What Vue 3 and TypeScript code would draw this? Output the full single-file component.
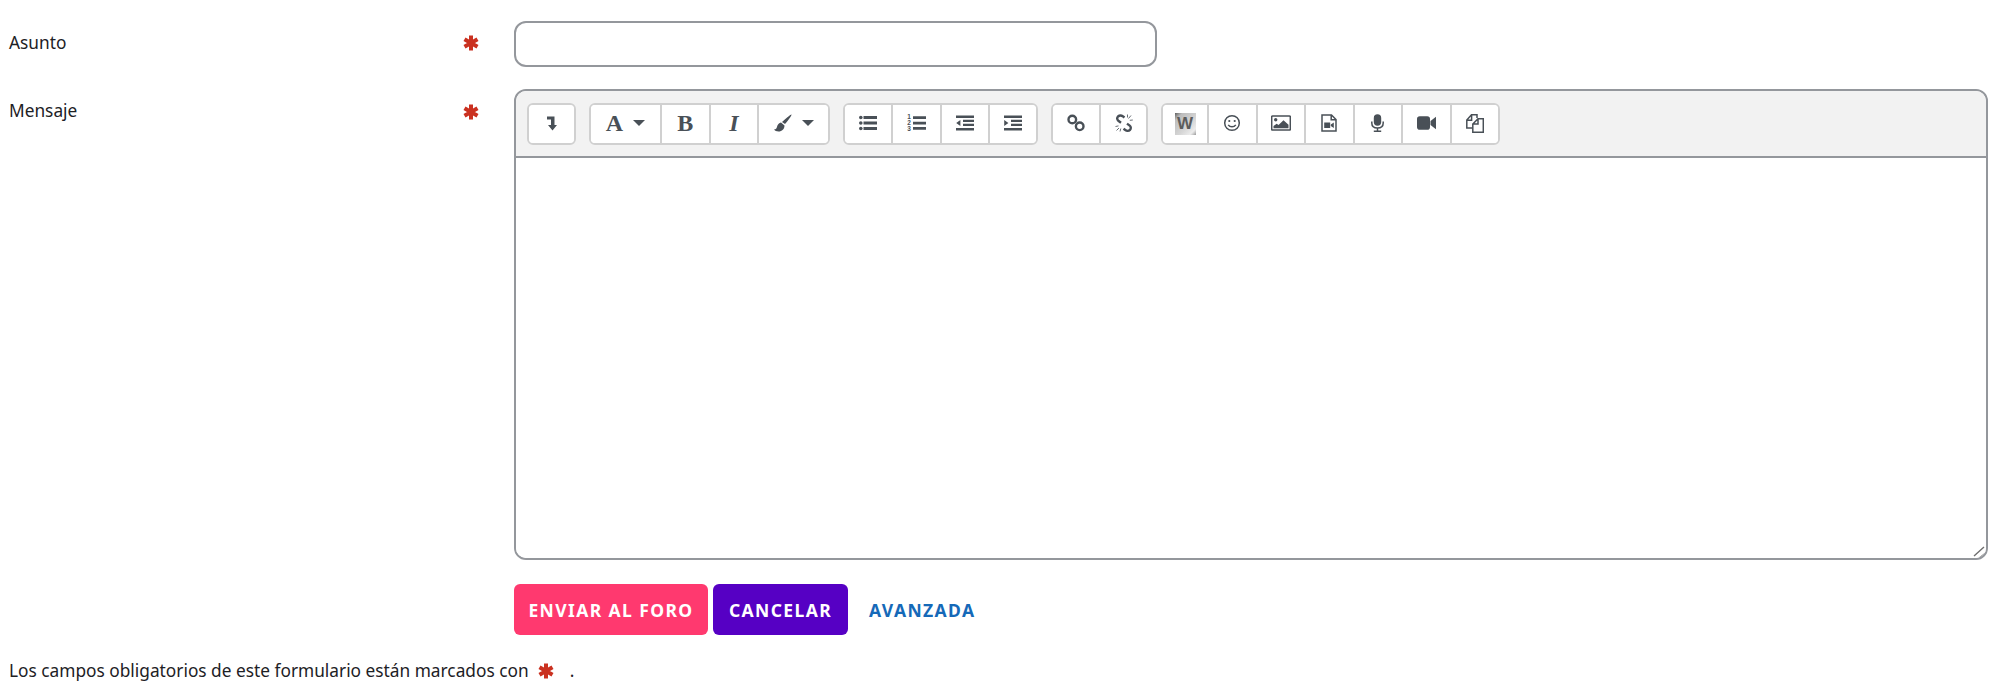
<script setup lang="ts">
const asterisk = 'M8 .5v15M1.500 4.250l13 7.500M14.500 4.250l-13 7.500';
</script>

<template>
  <form class="page" @submit.prevent>
    <div class="row row-subject">
      <label class="label" for="subject">Asunto</label>
      <svg class="req" viewBox="0 0 16 16"><path :d="asterisk" /></svg>
      <input id="subject" class="subject" type="text" />
    </div>

    <div class="row row-message">
      <label class="label" for="message">Mensaje</label>
      <svg class="req" viewBox="0 0 16 16"><path :d="asterisk" /></svg>
      <div class="editor">
        <div class="toolbar">
          <div class="group">
            <button type="button" class="tool">
              <svg viewBox="0 0 10 15" width="10" height="15"><path class="f" d="M0 .5h7.500V9H10L5.500 14.500 1 9h3V3.500H0z" /></svg>
            </button>
          </div>
          <div class="group">
            <button type="button" class="tool wide">
              <span class="serif big">A</span>
              <span class="caret"></span>
            </button>
            <button type="button" class="tool"><span class="serif big">B</span></button>
            <button type="button" class="tool"><span class="serif big ital">I</span></button>
            <button type="button" class="tool wide">
              <svg viewBox="0 0 18 18" width="18" height="18"><path class="f" d="M17.500.5C18 1 14 7 11 10L8 8C11 5 17 0 17.500.5zM7 8.500l3.500 3C10.500 15 8 17.500 4.500 17.500 2.500 17.500.8 16.800 0 15.500c2 0 2.500-1 3-2.700.5-2 2-4 4-4.300z" /></svg>
              <span class="caret"></span>
            </button>
          </div>
          <div class="group">
            <button type="button" class="tool">
              <svg viewBox="0 0 18 18" width="18" height="18"><circle class="f" cx="1.800" cy="3.500" r="1.800" /><circle class="f" cx="1.800" cy="9" r="1.800" /><circle class="f" cx="1.800" cy="14.500" r="1.800" /><path class="f" d="M4.500 2h13.500v3H4.500zM4.500 7.500h13.500v3H4.500zM4.500 13h13.500v3H4.500z" /></svg>
            </button>
            <button type="button" class="tool">
              <svg viewBox="0 0 19 18" width="19" height="18"><text class="num" x="0.300" y="5.200">1</text><text class="num" x="0.300" y="11">2</text><text class="num" x="0.300" y="17">3</text><path class="f" d="M6 2.300h13V5H6zM6 7.700h13v2.700H6zM6 13h13v2.700H6z" /></svg>
            </button>
            <button type="button" class="tool">
              <svg viewBox="0 0 18 18" width="18" height="18"><path class="f" d="M0 1.500h18v2.500H0zM7 5.700h11v2.300H7zM7 9.700h11v2.300H7zM0 14h18v2.500H0zM4.400 6v6L.2 9z" /></svg>
            </button>
            <button type="button" class="tool">
              <svg viewBox="0 0 18 18" width="18" height="18"><path class="f" d="M0 1.500h18v2.500H0zM7 5.700h11v2.300H7zM7 9.700h11v2.300H7zM0 14h18v2.500H0zM.2 6v6l4.200-3z" /></svg>
            </button>
          </div>
          <div class="group">
            <button type="button" class="tool">
              <svg viewBox="0 0 18 18" width="18" height="18"><g class="link"><circle cx="5.300" cy="5.500" r="3.800" /><circle cx="12.700" cy="12.300" r="3.800" /></g></svg>
            </button>
            <button type="button" class="tool">
              <svg viewBox="0 0 18 18" width="18" height="18"><g class="link"><path d="M9.500 3.500 7.800 2.300C6.500 1.300 4.300 1.300 3 2.500 1.800 3.700 2 5.700 3.300 6.700l2.700 2" /><path d="M8.500 14.700l1.800 1.300c1.300 1 3.500 1 4.700-.2 1.200-1.200 1-3.200-.3-4.200l-2.700-2" /></g><path class="thin" d="M12.500 .5v3M16 1.500l-2.500 3M17.800 6l-3 .3M.5 12.500l3-.6M1.500 16.500l2.500-2.500M5 17.500l.8-3" /></svg>
            </button>
          </div>
          <div class="group">
            <button type="button" class="tool word">
              <span class="wicon"><span class="wletter">W</span></span>
            </button>
            <button type="button" class="tool">
              <svg viewBox="0 0 18 18" width="18" height="18"><circle class="o" cx="9" cy="9" r="7.300" /><circle class="f" cx="6.300" cy="7" r="1.100" /><circle class="f" cx="11.700" cy="7" r="1.100" /><path class="o" d="M5.200 10.800c1.800 2.700 5.800 2.700 7.600 0" /></svg>
            </button>
            <button type="button" class="tool">
              <svg viewBox="0 0 20 16" width="20" height="16"><rect class="o" x=".7" y=".9" width="18.600" height="14.200" rx="1" /><circle class="f" cx="4.700" cy="4.800" r="1.700" /><path class="f" d="M2.500 13.300v-2.300l3.200-2.300 1.800 1.300 5-4.700 5 4.500v3.500z" /></svg>
            </button>
            <button type="button" class="tool">
              <svg viewBox="0 0 16 18" width="16" height="18"><path class="o" d="M1 1h9.500L15 5.500V17H1zM10.200 1v4.800H15" /><path class="f" d="M3.200 8.500h6v5.500h-6zM9.800 10.500l3-1.900v5.300l-3-1.900z" /></svg>
            </button>
            <button type="button" class="tool">
              <svg viewBox="0 0 13 18" width="13" height="18"><rect class="f" x="2.800" y=".3" width="7.400" height="11.500" rx="3.700" /><path class="o" d="M.8 7.500v1.500c0 3.200 2.500 5 5.700 5s5.700-1.800 5.700-5V7.500M6.500 14v3.300M2.800 17.300h7.400" /></svg>
            </button>
            <button type="button" class="tool">
              <svg viewBox="0 0 19 14" width="19" height="14"><rect class="f" x="0" y=".3" width="13" height="13.400" rx="2.800" /><path class="f" d="M13.500 5 19 .8v12.400L13.500 9z" /></svg>
            </button>
            <button type="button" class="tool">
              <svg viewBox="0 0 18 19" width="18" height="19"><path class="o" d="M11 4V.8H5.500L.8 6v8h5.500M.8 6.300h4.800V.8" /><path class="o" d="M12 4.700h5.300v13.600H6.800V10zM12 4.700V10H6.800" /></svg>
            </button>
          </div>
        </div>
        <textarea id="message" class="body"></textarea>
        <svg class="grip" viewBox="0 0 14 14" width="14" height="14"><path d="M2 12 12 3M7.300 14 14 8.700" /></svg>
      </div>
    </div>

    <div class="actions">
      <button type="button" class="btn primary">ENVIAR AL FORO</button>
      <button type="button" class="btn cancel">CANCELAR</button>
      <a class="advanced" href="#" @click.prevent>AVANZADA</a>
    </div>

    <p class="note">
      Los campos obligatorios de este formulario están marcados con
      <svg class="req req-inline" viewBox="0 0 16 16"><path :d="asterisk" /></svg>
      <span class="dot">.</span>
    </p>
  </form>
</template>

<style scoped>
.page {
  width: 2000px;
  height: 700px;
  box-sizing: border-box;
  padding: 21px 12px 0 9px;
  font-family: "Noto Sans", "Liberation Sans", sans-serif;
  font-size: 17.300px;
  color: #1d2125;
  background: #fff;
}
.row {
  display: flex;
  align-items: flex-start;
}
.row-subject {
  height: 68px;
}
.row-message {
  height: 471px;
}
.label {
  width: 454px;
  line-height: 24px;
  margin-top: 10px;
}
.req {
  width: 16px;
  height: 16px;
  flex: none;
  fill: none;
  stroke: #ca3120;
  stroke-width: 4;
}
.row-subject .req {
  margin-top: 14px;
}
.row-message .req {
  margin-top: 15px;
}
.row .req {
  margin-right: 35px;
}
.subject {
  width: 643px;
  height: 46px;
  box-sizing: border-box;
  border: 2px solid #94979c;
  border-radius: 12px;
  background: #fff;
  outline: none;
  padding: 0 12px;
}
.editor {
  position: relative;
  flex: 1;
  height: 471px;
  box-sizing: border-box;
  border: 2px solid #94979c;
  border-radius: 12px;
  display: flex;
  flex-direction: column;
  overflow: hidden;
  background: #fff;
}
.toolbar {
  height: 67px;
  flex: none;
  box-sizing: border-box;
  background: #f2f2f2;
  border-bottom: 2px solid #94979c;
  display: flex;
  gap: 13px;
  padding: 12px 0 0 11px;
}
.group {
  display: flex;
  height: 42px;
  box-sizing: border-box;
  border: 2px solid #d0d0d0;
  border-radius: 6px;
  background: #fff;
  overflow: hidden;
}
.tool {
  width: 46.700px;
  height: 36px;
  padding: 0 0 2px;
  border: 0;
  border-left: 2px solid #d0d0d0;
  background: #fff;
  display: flex;
  align-items: center;
  justify-content: center;
  gap: 10px;
  box-sizing: content-box;
}
.tool:first-child {
  border-left: 0;
  width: 45.700px;
}
.tool:last-child {
  width: 46px;
}
.tool:only-child {
  width: 45px;
}
.group:nth-child(4) .tool:last-child {
  width: 45px;
}
.tool.wide {
  width: 69px;
}
.group:last-child .tool:not(.word) {
  width: 46.500px;
}
.tool.word {
  width: 44px;
}
.f {
  fill: #495057;
}
.o {
  fill: none;
  stroke: #495057;
  stroke-width: 1.500;
}
.thin {
  fill: none;
  stroke: #6a7077;
  stroke-width: 1;
}
.link {
  fill: none;
  stroke: #495057;
  stroke-width: 2.400;
}
.num {
  font-family: "Liberation Sans", sans-serif;
  font-size: 6.500px;
  font-weight: 700;
  fill: #495057;
}
.serif {
  font-family: "Liberation Serif", serif;
  font-weight: 700;
  color: #495057;
  line-height: 1;
}
.big {
  font-size: 24px;
}
.ital {
  font-style: italic;
}
.caret {
  width: 0;
  height: 0;
  border-left: 6px solid transparent;
  border-right: 6px solid transparent;
  border-top: 6px solid #495057;
}
.wicon {
  position: relative;
  width: 21px;
  height: 22px;
  margin-top: 2px;
  background: linear-gradient(135deg, #5f5f5f 0, #bdbdbd 18%, #d6d6d6 60%, #ececec 85%, #9a9a9a 100%);
  display: flex;
  align-items: center;
  justify-content: center;
}
.wletter {
  font-family: "Liberation Sans", sans-serif;
  font-weight: 700;
  font-size: 17px;
  color: #5c5c5c;
}
.body {
  flex: 1;
  display: block;
  width: 100%;
  box-sizing: border-box;
  border: 0;
  outline: none;
  resize: none;
  background: #fff;
}
.grip {
  position: absolute;
  right: 0;
  bottom: 0;
  fill: none;
  stroke: #6f6f6f;
  stroke-width: 1.400;
}
.actions {
  display: flex;
  align-items: center;
  margin: 24px 0 0 505px;
  height: 51px;
}
.btn {
  height: 51px;
  border: 0;
  border-radius: 6px;
  color: #fff;
  font-family: "Noto Sans", "Liberation Sans", sans-serif;
  font-weight: 700;
  font-size: 17.500px;
  letter-spacing: 1.400px;
  padding: 1px 0 0;
}
.primary {
  width: 194px;
  background: #ff396f;
  margin-right: 5px;
}
.cancel {
  width: 135px;
  background: #5600c4;
}
.advanced {
  margin-left: 21px;
  padding-top: 1px;
  color: #1569b8;
  font-weight: 700;
  font-size: 17.500px;
  letter-spacing: 1.400px;
  text-decoration: none;
}
.note {
  margin: 23px 0 0;
  line-height: 26px;
  display: flex;
  align-items: center;
}
.req-inline {
  margin-left: 9px;
}
.dot {
  margin-left: 16px;
}
</style>
